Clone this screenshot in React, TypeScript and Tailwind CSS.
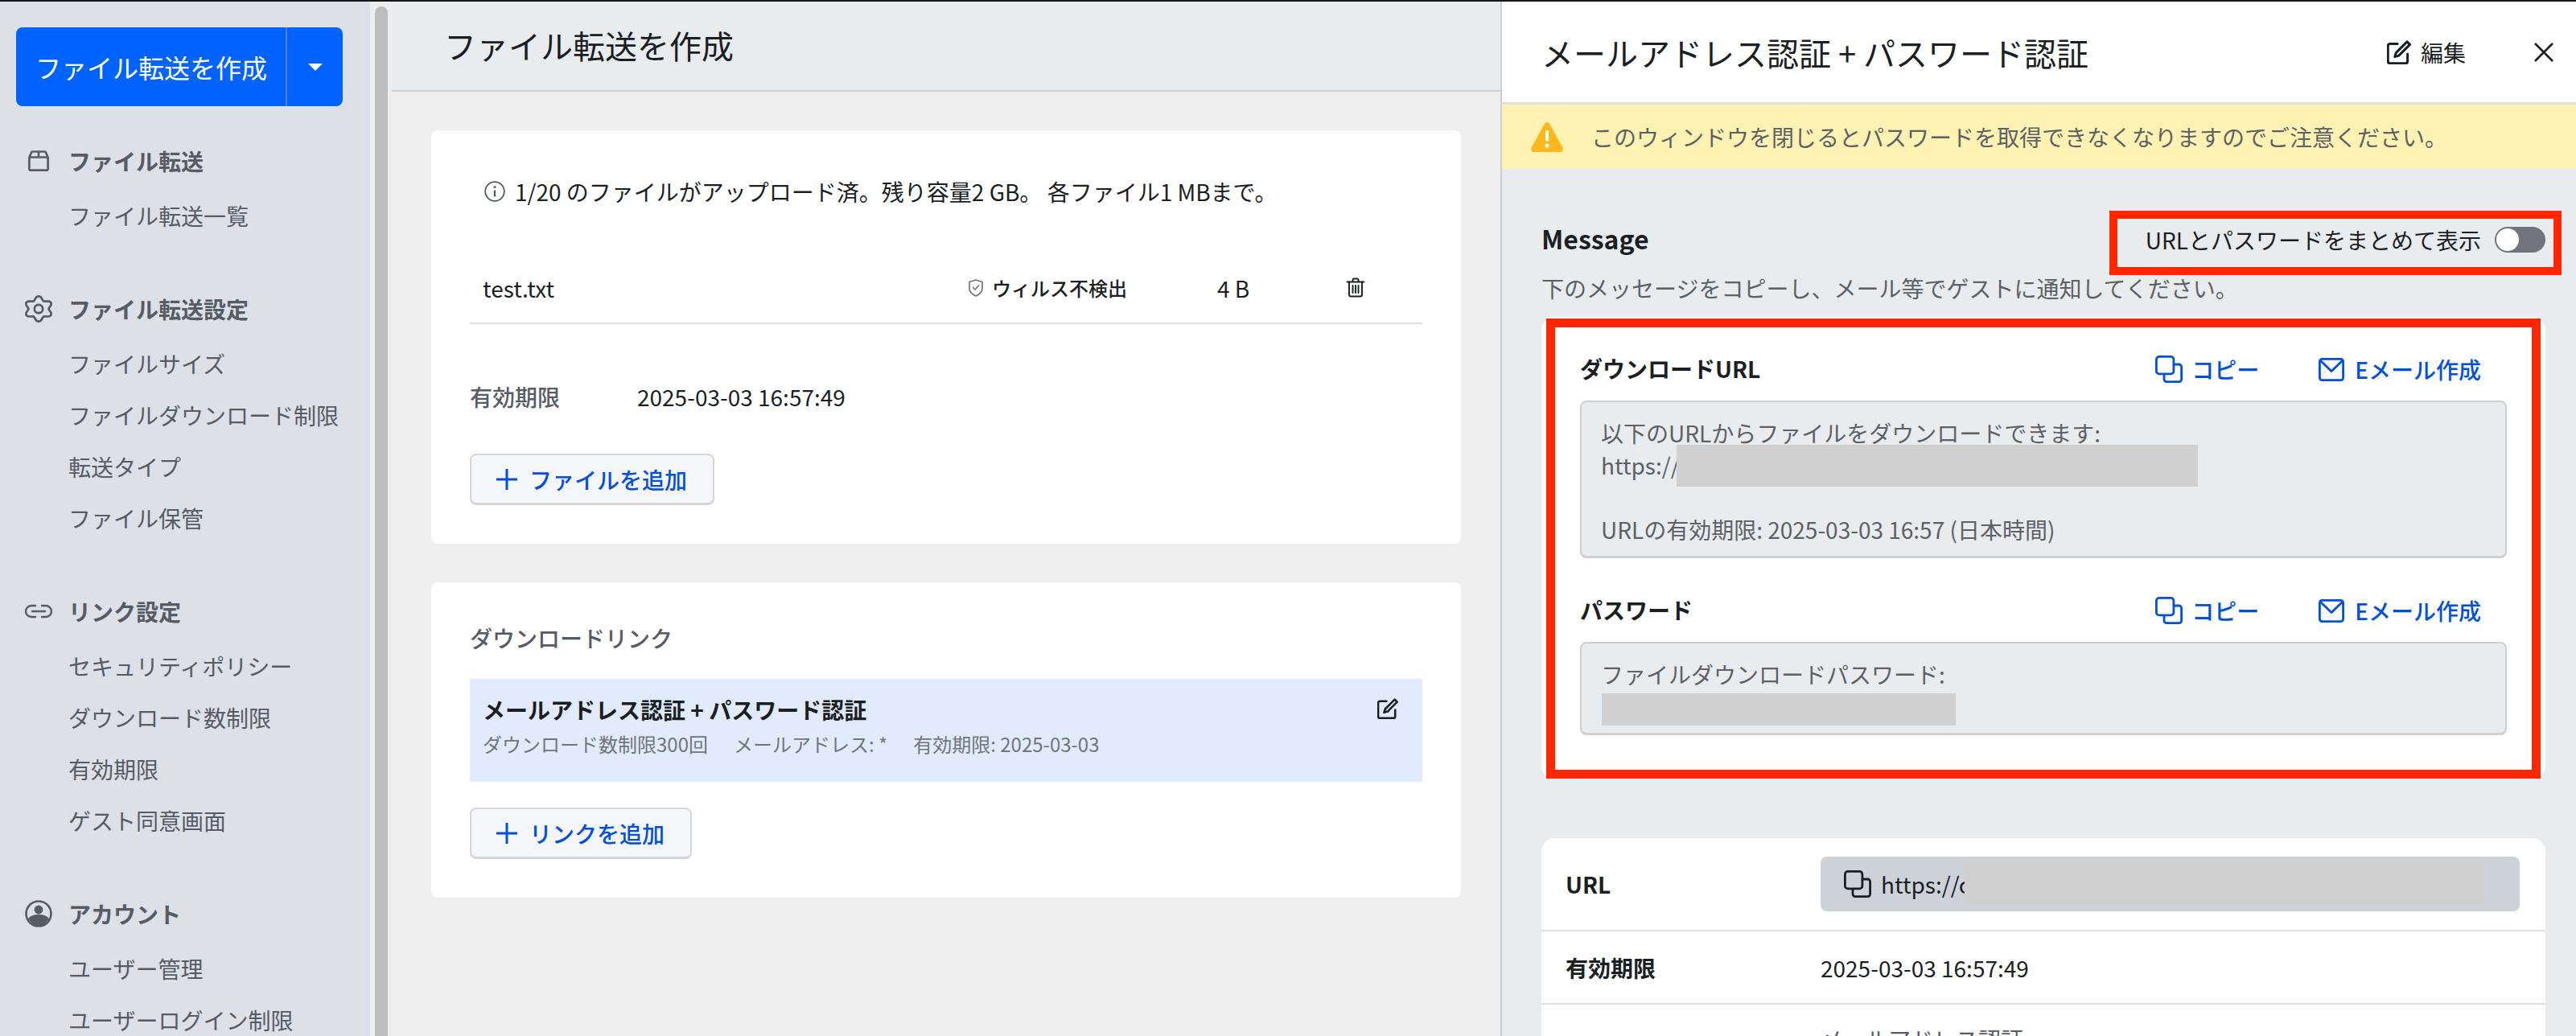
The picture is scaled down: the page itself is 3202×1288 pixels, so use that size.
import React from "react";

const cjk = { fontFamily: '"Noto Sans CJK JP", "Noto Sans", sans-serif' };

// six lobed cog outline
const gearPath =
  Array.from({ length: 72 }, (_, i) => {
    const t = (i / 72) * Math.PI * 2;
    const r = 13.4 - 2.3 * Math.cos(6 * t);
    const x = 17 + r * Math.cos(t) * 1.13;
    const y = 17 + r * Math.sin(t);
    return `${i === 0 ? "M" : "L"}${x.toFixed(2)} ${y.toFixed(2)}`;
  }).join(" ") + "z";

function BoxIcon() {
  return (
    <svg width="26" height="26" viewBox="0 0 26 26" fill="none" stroke="currentColor" strokeWidth="2.7" strokeLinejoin="round">
      <path d="M1.400 9v14a1.600 1.600 0 0 0 1.600 1.600h20a1.600 1.600 0 0 0 1.600-1.600V9L22 2.500a1.600 1.600 0 0 0-1.400-1H5.400a1.600 1.600 0 0 0-1.400 1z" />
      <path d="M2 8.500h22M13 2v6.500" />
    </svg>
  );
}

function GearIcon() {
  return (
    <svg width="34" height="34" viewBox="0 0 34 34" fill="none" stroke="currentColor" strokeWidth="2.7" strokeLinejoin="round">
      <path d={gearPath} />
      <circle cx="17" cy="17" r="5.200" />
    </svg>
  );
}

function LinkIcon() {
  return (
    <svg width="36" height="18" viewBox="0 0 36 18" fill="none" stroke="currentColor" strokeWidth="2.4" strokeLinecap="round">
      <path d="M14 2H9a7 7 0 0 0 0 14h5" />
      <path d="M22 2h5a7 7 0 0 1 0 14h-5" />
      <path d="M10 9h16" />
    </svg>
  );
}

function UserIcon() {
  return (
    <svg width="34" height="34" viewBox="0 0 34 34" fill="none">
      <circle cx="17" cy="17" r="15.500" stroke="currentColor" strokeWidth="2.600" />
      <circle cx="17" cy="12" r="5.400" fill="currentColor" />
      <path d="M4 23c3-4 8-5 13-5s10 1 13 5c-3 5-8 9-13 9s-10-4-13-9z" fill="currentColor" />
    </svg>
  );
}

function CopyIcon() {
  return (
    <svg width="34" height="34" viewBox="0 0 34 34" fill="none" stroke="currentColor" strokeWidth="2.800" strokeLinejoin="round">
      <rect x="1.400" y="1.400" width="21.500" height="21.500" rx="3.500" />
      <path d="M23 11h6.600a3 3 0 0 1 3 3v15.600a3 3 0 0 1-3 3H14a3 3 0 0 1-3-3V23" />
    </svg>
  );
}

function MailIcon() {
  return (
    <svg width="32" height="29" viewBox="0 0 32 29" fill="none" stroke="currentColor" strokeWidth="2.800" strokeLinejoin="round">
      <rect x="1.400" y="1.400" width="29.200" height="26.200" rx="3" />
      <path d="M2.500 3.500L16 16.500 29.500 3.500" />
    </svg>
  );
}

function EditIcon({ size = 30 }: { size?: number }) {
  return (
    <svg width={size} height={size} viewBox="0 0 24 24" fill="none" stroke="currentColor" strokeWidth="2.400" strokeLinejoin="round" strokeLinecap="round">
      <path d="M10.500 3.500H3a2 2 0 0 0-2 2V21a2 2 0 0 0 2 2h15.500a2 2 0 0 0 2-2v-7.500" />
      <path d="M20 1.500l2.800 2.800L11.800 15.300l-4 1.200 1.200-4z" />
    </svg>
  );
}

function TrashIcon() {
  return (
    <svg width="24" height="25" viewBox="0 0 24 25" fill="none" stroke="currentColor" strokeWidth="1.900" strokeLinejoin="round" strokeLinecap="round">
      <path d="M1.500 5.500h21M8.500 5.500V3a1.500 1.500 0 0 1 1.500-1.500h4A1.500 1.500 0 0 1 15.500 3v2.500" />
      <path d="M4 5.500v16a2 2 0 0 0 2 2h12a2 2 0 0 0 2-2v-16" />
      <path d="M8.500 10v9M12 10v9M15.500 10v9" />
    </svg>
  );
}

function ShieldIcon() {
  return (
    <svg width="18" height="22" viewBox="0 0 18 22" fill="none" stroke="currentColor" strokeWidth="1.700" strokeLinejoin="round" strokeLinecap="round">
      <path d="M9 1l8 2.500v8c0 4.500-3.500 7.500-8 9.500-4.500-2-8-5-8-9.500v-8z" />
      <path d="M5.500 10.500l2.500 2.500 4.500-5" />
    </svg>
  );
}

function PlusIcon() {
  return (
    <svg width="28" height="28" viewBox="0 0 28 28" fill="none" stroke="currentColor" strokeWidth="3">
      <path d="M14 1v26M1 14h26" />
    </svg>
  );
}

function InfoIcon() {
  return (
    <svg width="26" height="26" viewBox="0 0 26 26" fill="none" stroke="currentColor" strokeWidth="1.800">
      <circle cx="13" cy="13" r="11.800" />
      <path d="M13 11.500v8" strokeWidth="2.400" />
      <circle cx="13" cy="7.500" r="1.500" fill="currentColor" stroke="none" />
    </svg>
  );
}

function WarnIcon() {
  return (
    <svg width="42" height="40" viewBox="0 0 42 40">
      <path d="M21 2c1.500 0 2.500.8 3.300 2.200l16 29c1.500 2.800 0 5.800-3.300 5.800H5c-3.300 0-4.800-3-3.300-5.800l16-29C18.500 2.800 19.500 2 21 2z" fill="#ffb81c" />
      <rect x="19" y="12" width="4" height="14" rx="2" fill="#fff" />
      <circle cx="21" cy="31" r="2.500" fill="#fff" />
    </svg>
  );
}

function AddButton({ label }: { label: string }) {
  return (
    <button className="flex h-16 items-center gap-[14px] rounded-lg border-2 border-b-[3px] border-[#d3d6da] bg-[#f4f6f9] pr-[32px] pl-[30px] text-[28px] font-medium text-[#0050d8]">
      <PlusIcon />
      <span>{label}</span>
    </button>
  );
}

function NavSection({ icon, title, items, last }: { icon: React.ReactNode; title: string; items: string[]; last?: boolean }) {
  return (
    <div className={last ? "" : "mb-[52px]"}>
      <div className="flex h-[64px] items-center text-[#565c65]">
        <div className="flex w-[85px] justify-center pl-[11px]">{icon}</div>
        <span className="text-[28px] font-bold">{title}</span>
      </div>
      <div className="mt-[4px] flex flex-col pl-[85px] text-[#565c65]">
        {items.map((item) => (
          <span key={item} className="flex h-[64px] items-center text-[28px] whitespace-nowrap">
            {item}
          </span>
        ))}
      </div>
    </div>
  );
}

function MessageBlock({ title, children }: { title: string; children: React.ReactNode }) {
  return (
    <div>
      <div className="flex h-[64px] items-center justify-between pr-[32px] text-[28px] font-medium text-[#0050d8]">
        <span className="pb-[4px] font-bold text-[#1b1f24]">{title}</span>
        <div className="flex items-center gap-[74px] pb-[2px]">
          <span className="flex items-center gap-[11px]">
            <CopyIcon />
            コピー
          </span>
          <span className="flex items-center gap-[13px]">
            <MailIcon />
            Eメール作成
          </span>
        </div>
      </div>
      <div className="relative mt-[6px] rounded-lg border-2 border-b-[3px] border-[#ccd0d5] bg-[#e9ecef] px-[24px] pt-[18px] pb-[13px] text-[28px] leading-[40px] text-[#5c6166]">
        {children}
      </div>
    </div>
  );
}

export default function App() {
  return (
    <div style={cjk} className="flex h-[1288px] w-[3202px] overflow-hidden border-t-2 border-[#15171a] bg-[#eeeeee] text-[#1b1f24]">
      {/* SIDEBAR */}
      <aside className="h-full w-[460px] shrink-0 overflow-hidden bg-[#dde0e7]">
        <div className="mt-[32px] ml-[20px] flex h-[98px] w-[406px] items-center rounded-lg bg-[#0062ff] text-white">
          <span className="flex-1 pl-[24px] text-[32px] leading-none whitespace-nowrap">ファイル転送を作成</span>
          <span className="flex h-full w-[71px] items-center justify-center border-l-2 border-[#5c7fb8]">
            <span className="h-0 w-0 border-x-[9px] border-t-[9px] border-x-transparent border-t-white" />
          </span>
        </div>
        <div className="mt-[36px]">
          <NavSection icon={<BoxIcon />} title="ファイル転送" items={["ファイル転送一覧"]} />
          <NavSection icon={<GearIcon />} title="ファイル転送設定" items={["ファイルサイズ", "ファイルダウンロード制限", "転送タイプ", "ファイル保管"]} />
          <NavSection icon={<LinkIcon />} title="リンク設定" items={["セキュリティポリシー", "ダウンロード数制限", "有効期限", "ゲスト同意画面"]} />
          <NavSection icon={<UserIcon />} title="アカウント" items={["ユーザー管理", "ユーザーログイン制限"]} last />
        </div>
      </aside>

      {/* SCROLLBAR */}
      <div className="h-full w-[26px] shrink-0 bg-[#eeeeee] pt-[6px] pr-[4px] pl-[6px]">
        <div className="h-full rounded-t-lg bg-[#bdbdbd]" />
      </div>

      {/* MAIN */}
      <main className="h-full w-[1379px] shrink-0">
        <div className="flex h-[112px] items-center border-b-2 border-[#ccd0d5] bg-[#e9ecef] pb-[2px] pl-[66px]">
          <h1 className="text-[40px] leading-none">ファイル転送を作成</h1>
        </div>

        <div className="mt-[48px] ml-[50px] w-[1280px]">
          <section className="h-[514px] rounded-lg bg-white px-[48px]">
            <div className="flex h-[152px] items-center gap-[12px] pl-[18px] text-[28px]">
              <span className="text-[#565c65]">
                <InfoIcon />
              </span>
              <span>1/20 のファイルがアップロード済。残り容量2 GB。 各ファイル1 MBまで。</span>
            </div>
            <div className="flex h-[89px] items-center border-b-2 border-[#dde0e7] pl-[16px]">
              <span className="w-[604px] text-[28px]">test.txt</span>
              <span className="flex w-[309px] items-center gap-[11px] text-[24px] font-medium">
                <span className="text-[#71767a]">
                  <ShieldIcon />
                </span>
                ウィルス不検出
              </span>
              <span className="w-[160px] text-[28px]">4 B</span>
              <TrashIcon />
            </div>
            <div className="mt-[62px] flex h-[56px] items-center text-[28px]">
              <span className="w-[208px] font-medium text-[#565c65]">有効期限</span>
              <span>2025-03-03 16:57:49</span>
            </div>
            <div className="mt-[43px]">
              <AddButton label="ファイルを追加" />
            </div>
          </section>

          <section className="mt-[48px] h-[392px] rounded-lg bg-white px-[48px]">
            <div className="flex h-[120px] items-center pt-[18px] text-[28px] font-medium text-[#565c65]">ダウンロードリンク</div>
            <div className="flex h-[128px] items-start justify-between bg-[#e1ebfd] pt-[18px] pr-[30px] pl-[16px]">
              <div>
                <div className="text-[28px] leading-[40px] font-semibold">メールアドレス認証 + パスワード認証</div>
                <div className="mt-[6px] flex gap-[32px] text-[24px] leading-[34px] text-[#71767a]">
                  <span>ダウンロード数制限300回</span>
                  <span>メールアドレス: *</span>
                  <span>有効期限: 2025-03-03</span>
                </div>
              </div>
              <div className="pt-[6px]">
                <EditIcon size={26} />
              </div>
            </div>
            <div className="mt-[32px]">
              <AddButton label="リンクを追加" />
            </div>
          </section>
        </div>
      </main>

      {/* RIGHT PANEL */}
      <aside className="relative h-full flex-1 overflow-hidden border-l-2 border-[#ccd0d5] bg-[#e9ecef]">
        <div className="flex h-[128px] items-center justify-between border-b-[3px] border-[#e0e0e0] bg-white pr-[27px] pl-[49px]">
          <h2 className="text-[40px] leading-none whitespace-nowrap">メールアドレス認証 + パスワード認証</h2>
          <div className="flex items-center">
            <span className="flex items-center gap-[12px] text-[28px]">
              <EditIcon size={30} />
              編集
            </span>
            <svg className="ml-[84px]" width="26" height="26" viewBox="0 0 26 26" fill="none" stroke="currentColor" strokeWidth="2.600">
              <path d="M2 2l22 22M24 2L2 24" />
            </svg>
          </div>
        </div>

        <div className="flex h-[80px] items-center gap-[34px] bg-[#fff2b3] pl-[35px] text-[28px] whitespace-nowrap text-[#5c6166]">
          <WarnIcon />
          <span>このウィンドウを閉じるとパスワードを取得できなくなりますのでご注意ください。</span>
        </div>

        <div className="pr-[38px] pl-[49px]">
          <div className="mt-[51px] flex h-[70px] items-center justify-between">
            <span className="text-[32px] font-semibold text-[#1b1f24]">Message</span>
            <span className="flex items-center gap-[17px] pt-[4px] text-[28px]">
              URLとパスワードをまとめて表示
              <span className="flex h-[32px] w-[63px] items-center rounded-full bg-[#71747c] pl-[2px]">
                <span className="h-[28px] w-[28px] rounded-full bg-white" />
              </span>
            </span>
          </div>
          <p className="mt-[10px] text-[28px] leading-[34px] text-[#5c6166]">下のメッセージをコピーし、メール等でゲストに通知してください。</p>

          <div className="mt-[19px] h-[574px] rounded-2xl bg-white px-[48px] pt-[34px]">
            <MessageBlock title="ダウンロードURL">
              <div>以下のURLからファイルをダウンロードできます:</div>
              <div>https://</div>
              <div>&nbsp;</div>
              <div>URLの有効期限: 2025-03-03 16:57 (日本時間)</div>
              <span className="absolute top-[53px] left-[118px] h-[52px] w-[648px] bg-[#d0d0d0]" />
            </MessageBlock>
            <div className="mt-[34px]">
              <MessageBlock title="パスワード">
                <div>ファイルダウンロードパスワード:</div>
                <div className="h-[40px]" />
                <span className="absolute top-[62px] left-[25px] h-[40px] w-[440px] bg-[#d0d0d0]" />
              </MessageBlock>
            </div>
          </div>

          <div className="mt-[74px] rounded-2xl bg-white text-[28px]">
            <div className="flex h-[116px] items-center border-b-2 border-[#e0e0e0] pr-[32px] pl-[30px]">
              <span className="w-[317px] font-semibold">URL</span>
              <div className="relative flex h-[68px] flex-1 items-center gap-[12px] rounded-lg bg-[#cdd2d9] pl-[29px]">
                <CopyIcon />
                <span>https://c</span>
                <span className="absolute top-[8px] left-[179px] h-[52px] w-[647px] bg-[#d0d0d0]" />
              </div>
            </div>
            <div className="flex h-[91px] items-center border-b-2 border-[#e0e0e0] pl-[30px]">
              <span className="w-[317px] font-semibold">有効期限</span>
              <span>2025-03-03 16:57:49</span>
            </div>
            <div className="flex h-[90px] items-start pt-[22px] pl-[347px] text-[#565c65]">
              <span>メールアドレス認証</span>
            </div>
          </div>
        </div>

        {/* annotation boxes */}
        <div className="absolute top-[260px] left-[755px] h-[80px] w-[562px] border-[10px] border-[#ff2600]" />
        <div className="absolute top-[394px] left-[55px] h-[572px] w-[1236px] border-[11px] border-[#ff2600]" />
      </aside>
    </div>
  );
}
